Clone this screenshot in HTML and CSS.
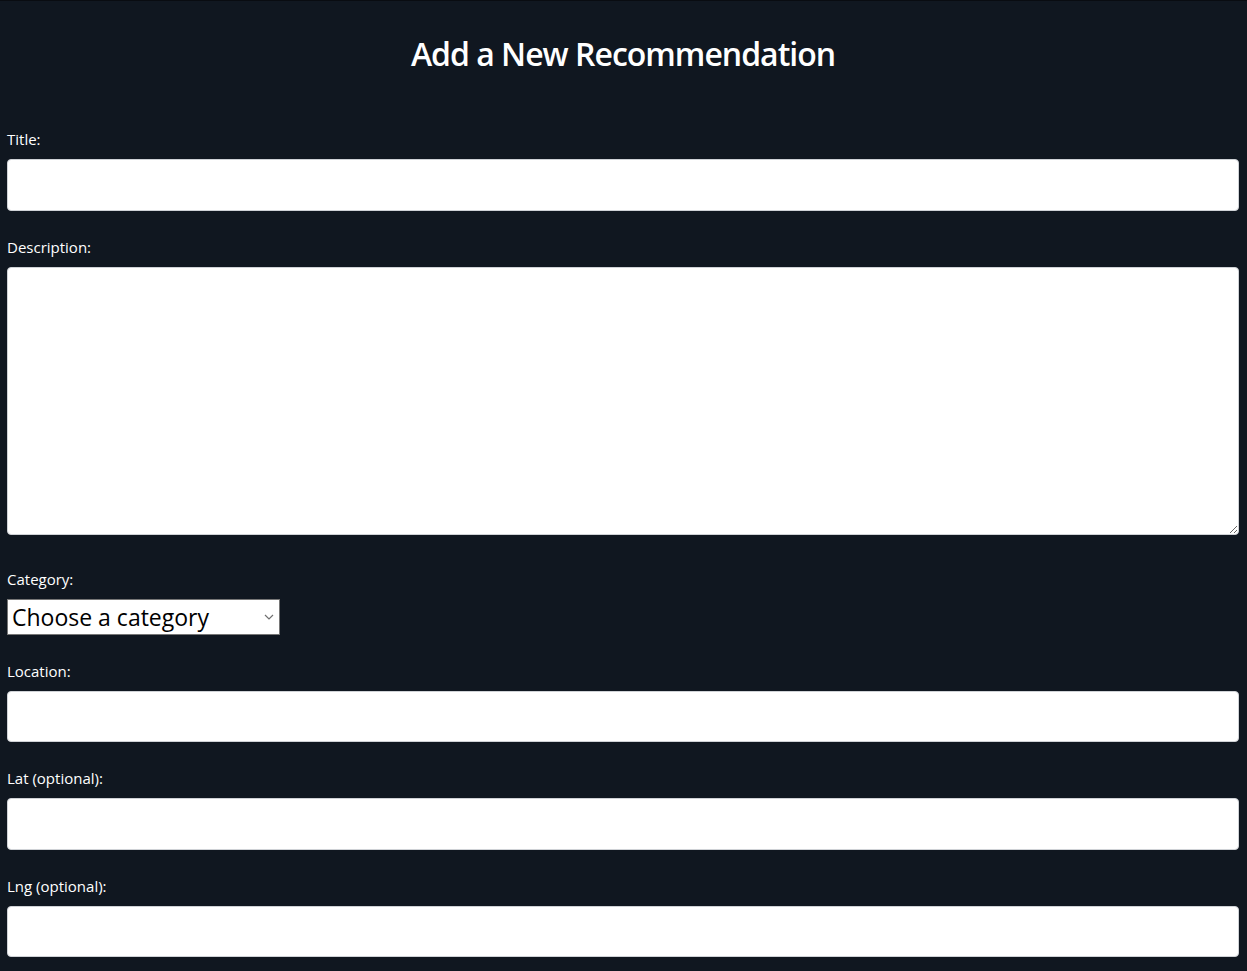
FILE: index.html
```html
<!DOCTYPE html>
<html lang="en">
<head>
<meta charset="utf-8">
<title>Add a New Recommendation</title>
<link rel="stylesheet" href="styles.css">
</head>
<body>
<div class="page">
  <h1 class="heading">Add a New Recommendation</h1>
  <form class="form">
    <div class="field">
      <label class="label" for="title">Title:</label>
      <input class="input" id="title" type="text">
    </div>
    <div class="field field-area">
      <label class="label" for="desc">Description:</label>
      <textarea class="textarea" id="desc"></textarea>
    </div>
    <div class="field">
      <label class="label" for="cat">Category:</label>
      <select class="select" id="cat">
        <option>Choose a category</option>
      </select>
    </div>
    <div class="field">
      <label class="label" for="loc">Location:</label>
      <input class="input" id="loc" type="text">
    </div>
    <div class="field">
      <label class="label" for="lat">Lat (optional):</label>
      <input class="input" id="lat" type="text">
    </div>
    <div class="field">
      <label class="label" for="lng">Lng (optional):</label>
      <input class="input" id="lng" type="text">
    </div>
  </form>
</div>
</body>
</html>
```
FILE: styles.css
```css
html, body {
  margin: 0;
  padding: 0;
  background: #101720;
}
body {
  border-top: 1px solid #090c11;
  font-family: "Open Sans", "Noto Sans", sans-serif;
  color: #ffffff;
}
.page {
  padding: 0 8px 0 7px;
}
.heading {
  margin: 0;
  padding-top: 31px;
  font-size: 32px;
  line-height: 43px;
  font-weight: 600;
  letter-spacing: -1px;
  text-align: center;
}
.form {
  display: flex;
  flex-direction: column;
  gap: 26px;
  margin-top: 54px;
}
.field {
  display: flex;
  flex-direction: column;
  align-items: flex-start;
  gap: 10px;
}
.field-area {
  margin-bottom: 8px;
}
.label {
  font-size: 15px;
  line-height: 20px;
}
.input, .textarea {
  box-sizing: border-box;
  width: 100%;
  height: 51.5px;
  margin: 0;
  background: #ffffff;
  border: 1px solid #cfd2d6;
  border-radius: 4px;
  font-family: inherit;
  font-size: 16px;
}
.textarea {
  height: 268px;
  resize: vertical;
}
.select {
  box-sizing: border-box;
  width: 273px;
  height: 36px;
  margin: 0;
  padding: 0 24px 0 4px;
  border: 1px solid #767676;
  border-radius: 0;
  background-color: #ffffff;
  background-image: url("data:image/svg+xml,%3Csvg xmlns='http://www.w3.org/2000/svg' width='10' height='6' viewBox='0 0 10 6'%3E%3Cpath d='M1 1l4 4 4-4' fill='none' stroke='%23707070' stroke-width='1.2'/%3E%3C/svg%3E");
  background-repeat: no-repeat;
  background-position: right 5px center;
  -webkit-appearance: none;
  appearance: none;
  color: #000000;
  font-family: inherit;
  font-size: 23px;
}
```
